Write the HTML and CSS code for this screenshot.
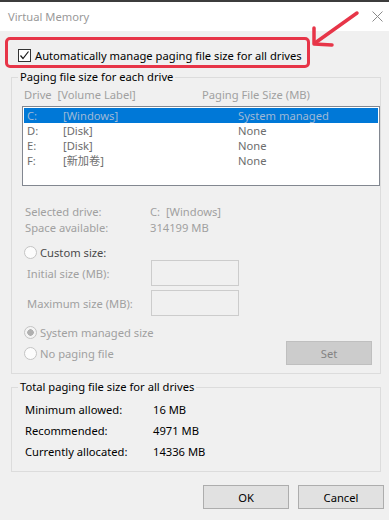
FILE: index.html
```html
<!DOCTYPE html>
<html lang="en">
<head>
    <meta charset="UTF-8">
    <meta name="viewport" content="width=device-width, initial-scale=1.0">
    <title>Virtual Memory</title>
    <link rel="stylesheet" href="styles.css">
</head>
<body>
    <div class="window">
        <div class="titlebar">
            <span class="title">Virtual Memory</span>
            <svg class="close" width="11" height="11" viewBox="0 0 11 11">
                <path d="M0.5 0.5 L10.5 10.5 M10.5 0.5 L0.5 10.5" stroke="#8a8a8a" stroke-width="1" fill="none"/>
            </svg>
        </div>

        <div class="auto-box">
            <span class="checkbox">
                <svg width="11" height="11" viewBox="0 0 11 11">
                    <path d="M1.5 5.5 L4 8.5 L9.5 1.5" stroke="#1a1a1a" stroke-width="1.2" fill="none"/>
                </svg>
            </span>
            <span>Automatically manage paging file size for all drives</span>
        </div>

        <fieldset class="group group-drives">
            <legend>Paging file size for each drive</legend>

            <div class="list-head">
                <span class="col-head">Drive&nbsp;&nbsp;[Volume Label]</span>
                <span class="col-head col-size">Paging File Size (MB)</span>
            </div>

            <div class="listbox">
                <div class="row selected">
                    <span class="c-drive">C:</span>
                    <span class="c-label">[Windows]</span>
                    <span>System managed</span>
                </div>
                <div class="row">
                    <span class="c-drive">D:</span>
                    <span class="c-label">[Disk]</span>
                    <span>None</span>
                </div>
                <div class="row">
                    <span class="c-drive">E:</span>
                    <span class="c-label">[Disk]</span>
                    <span>None</span>
                </div>
                <div class="row">
                    <span class="c-drive">F:</span>
                    <span class="c-label">[新加卷]</span>
                    <span>None</span>
                </div>
            </div>

            <div class="info">
                <div class="info-row"><span class="info-label">Selected drive:</span><span>C:&nbsp;&nbsp;[Windows]</span></div>
                <div class="info-row"><span class="info-label">Space available:</span><span>314199 MB</span></div>
            </div>

            <div class="radio-row custom">
                <span class="radio"></span>
                <span>Custom size:</span>
            </div>
            <div class="field-row">
                <span class="field-label">Initial size (MB):</span>
                <span class="field"></span>
            </div>
            <div class="field-row field-row-max">
                <span class="field-label">Maximum size (MB):</span>
                <span class="field"></span>
            </div>

            <div class="radio-row system">
                <span class="radio checked"></span>
                <span>System managed size</span>
            </div>
            <div class="set-row">
                <div class="radio-row">
                    <span class="radio"></span>
                    <span>No paging file</span>
                </div>
                <span class="btn btn-disabled">Set</span>
            </div>
        </fieldset>

        <fieldset class="group group-total">
            <legend>Total paging file size for all drives</legend>
            <div class="total-row"><span class="total-label">Minimum allowed:</span><span>16 MB</span></div>
            <div class="total-row"><span class="total-label">Recommended:</span><span>4971 MB</span></div>
            <div class="total-row"><span class="total-label">Currently allocated:</span><span>14336 MB</span></div>
        </fieldset>

        <div class="actions">
            <span class="btn">OK</span>
            <span class="btn">Cancel</span>
        </div>

        <!-- annotation arrow pointing at the checkbox -->
        <svg class="arrow" width="70" height="50" viewBox="0 0 70 50">
            <path d="M57 8 L15 38" stroke="#e73548" stroke-width="3.5" stroke-linecap="round" fill="none"/>
            <path d="M14 23 L14 39 L32 40" stroke="#e73548" stroke-width="3.5" stroke-linecap="round" stroke-linejoin="round" fill="none"/>
        </svg>
    </div>
</body>
</html>
```

FILE: styles.css
```css
body {
    margin: 0;
    font-family: "Noto Sans", "Noto Sans CJK SC", sans-serif;
    font-size: 11.2px;
    color: #000;
    background: #f0f0f0;
    white-space: nowrap;
}

.window {
    position: relative;
    width: 389px;
    height: 520px;
    background: #f0f0f0;
    overflow: hidden;
}

.titlebar {
    display: flex;
    align-items: center;
    justify-content: space-between;
    height: 29px;
    padding: 0 6px 0 8px;
    background: #ffffff;
    border-top: 2px solid #3c3c3c;
}

.title {
    color: #999999;
}

.auto-box {
    display: flex;
    align-items: center;
    gap: 4px;
    box-sizing: border-box;
    width: 305px;
    height: 31px;
    margin: 6px 0 0 5px;
    padding: 6px 0 0 10px;
    border: 3px solid #e73548;
    border-radius: 5px;
}

.checkbox {
    display: flex;
    align-items: center;
    justify-content: center;
    box-sizing: border-box;
    width: 13px;
    height: 13px;
    background: #ffffff;
    border: 1px solid #333333;
}

.group {
    box-sizing: border-box;
    width: 370px;
    min-width: 0;
    margin: 1px 0 0 11px;
    padding: 0;
    border: 1px solid #dcdcdc;
}

.group legend {
    margin-left: 6px;
    padding: 0 2px;
    line-height: 16px;
}

.list-head {
    display: flex;
    height: 16px;
    line-height: 16px;
    margin-top: 2px;
    padding-left: 12px;
    color: #a0a0a0;
}

.col-head {
    width: 180px;
}

.listbox {
    box-sizing: border-box;
    width: 358px;
    height: 80px;
    margin: 3px 0 0 10px;
    padding: 1px;
    background: #ffffff;
    border: 1px solid #828790;
}

.row {
    display: flex;
    height: 15px;
    line-height: 15px;
    padding-left: 3px;
    color: #6d6d6d;
}

.row.selected {
    background: #0078d7;
    color: #9fb9d6;
}

.c-drive {
    width: 36px;
}

.c-label {
    width: 175px;
}

.info {
    margin-top: 18px;
    padding-left: 13px;
    color: #a0a0a0;
}

.info-row {
    display: flex;
    height: 16px;
    line-height: 16px;
}

.info-label {
    width: 125px;
}

.radio-row {
    display: flex;
    align-items: center;
    gap: 3px;
    height: 16px;
    padding-left: 12px;
    color: #a0a0a0;
}

.radio-row.custom {
    height: 15px;
    margin-top: 9px;
    color: #4a4a4a;
}

.radio {
    box-sizing: border-box;
    width: 13px;
    height: 13px;
    border: 1px solid #c4c4c4;
    border-radius: 50%;
    background: #fcfcfc;
}

.radio.checked {
    background: radial-gradient(circle, #b0b0b0 0, #b0b0b0 3px, #f4f4f4 3.5px);
}

.field-row {
    display: flex;
    align-items: center;
    height: 26px;
    padding-left: 15px;
    color: #a0a0a0;
}

.field-row-max {
    margin-top: 4px;
}

.field-label {
    width: 124px;
}

.field {
    box-sizing: border-box;
    width: 88px;
    height: 26px;
    border: 1px solid #cccccc;
    background: #f0f0f0;
}

.radio-row.system {
    margin-top: 8px;
}

.set-row {
    display: flex;
    align-items: center;
    justify-content: space-between;
    height: 24px;
    margin-top: 1px;
    padding-right: 8px;
    padding-bottom: 8px;
}

.set-row .radio-row {
    padding-left: 12px;
}

.btn {
    display: flex;
    align-items: center;
    justify-content: center;
    box-sizing: border-box;
    width: 86px;
    height: 24px;
    background: #e1e1e1;
    border: 1px solid #adadad;
}

.btn-disabled {
    background: #cccccc;
    border-color: #bfbfbf;
    color: #838383;
}

.group-total {
    margin-top: 5px;
    padding: 4px 0 9px 0;
}

.total-row {
    display: flex;
    align-items: center;
    height: 21px;
    padding-left: 13px;
}

.total-label {
    width: 128px;
}

.actions {
    display: flex;
    justify-content: flex-end;
    gap: 9px;
    margin-top: 13px;
    padding-right: 5px;
}

.arrow {
    position: absolute;
    top: 5px;
    left: 300px;
    pointer-events: none;
}
```
